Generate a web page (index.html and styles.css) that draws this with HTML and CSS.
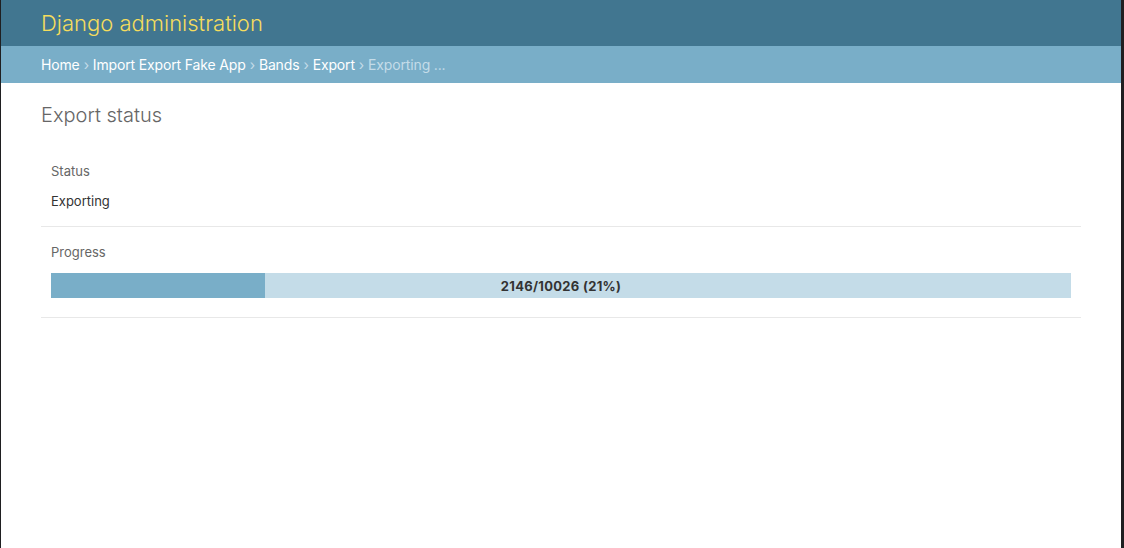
FILE: index.html
```html
<!DOCTYPE html>
<html lang="en">
<head>
<meta charset="utf-8">
<title>Export status | Django site admin</title>
<link rel="stylesheet" href="styles.css">
</head>
<body>
<div class="page">
  <header class="header">
    <div class="branding">Django administration</div>
  </header>
  <nav class="breadcrumbs">
    <a href="#">Home</a><span class="sep">›</span><a href="#">Import Export Fake App</a><span class="sep">›</span><a href="#">Bands</a><span class="sep">›</span><a href="#">Export</a><span class="sep">›</span><span class="current">Exporting ...</span>
  </nav>
  <main class="content">
    <h1 class="title">Export status</h1>
    <div class="rows">
      <div class="row row-status">
        <div class="label">Status</div>
        <div class="value">Exporting</div>
      </div>
      <div class="row row-progress">
        <div class="label">Progress</div>
        <div class="progress">
          <div class="progress-fill" style="width: 21%"></div>
          <div class="progress-text">2146/10026 (21%)</div>
        </div>
      </div>
    </div>
  </main>
</div>
</body>
</html>
```

FILE: styles.css
```css
html, body {
  margin: 0;
  padding: 0;
  background: #1f1f21;
}
.page {
  box-sizing: border-box;
  min-height: 548px;
  margin-left: 1px;
  margin-right: 3px;
  background: #fff;
  font-family: Inter, "Liberation Sans", sans-serif;
  color: #333;
}
.header {
  background: #417690;
  padding: 10px 40px;
  height: 46px;
  box-sizing: border-box;
}
.branding {
  color: #f5dd5d;
  font-size: 22px;
  font-weight: 300;
  line-height: 26px;
}
.breadcrumbs {
  background: #79aec8;
  padding: 10px 40px;
  height: 37px;
  box-sizing: border-box;
  font-size: 14px;
  line-height: 17px;
  letter-spacing: -0.15px;
  color: #c4dce8;
}
.breadcrumbs a {
  color: #fff;
  text-decoration: none;
}
.breadcrumbs .sep {
  margin: 0 4px;
  color: #c4dce8;
}
.breadcrumbs .current {
  color: #c4dce8;
}
.content {
  padding: 20px 40px 0 40px;
}
.title {
  margin: 0 0 20px;
  font-size: 20px;
  font-weight: 300;
  line-height: 24px;
  color: #666;
}
.row {
  padding: 16px 10px 17px;
  border-bottom: 1px solid #e8e8e8;
}
.row-progress {
  padding: 17px 10px 19px;
}
.label {
  font-size: 13px;
  line-height: 16px;
  color: #666;
}
.value {
  margin-top: 14px;
  font-size: 13px;
  line-height: 16px;
  color: #333;
}
.progress {
  position: relative;
  margin-top: 13px;
  height: 25px;
  background: #c4dce8;
}
.progress-fill {
  height: 100%;
  background: #79aec8;
}
.progress-text {
  position: absolute;
  inset: 0;
  display: flex;
  align-items: center;
  justify-content: center;
  font-size: 13px;
  font-weight: 700;
  color: #333;
  letter-spacing: 0.3px;
}
```
